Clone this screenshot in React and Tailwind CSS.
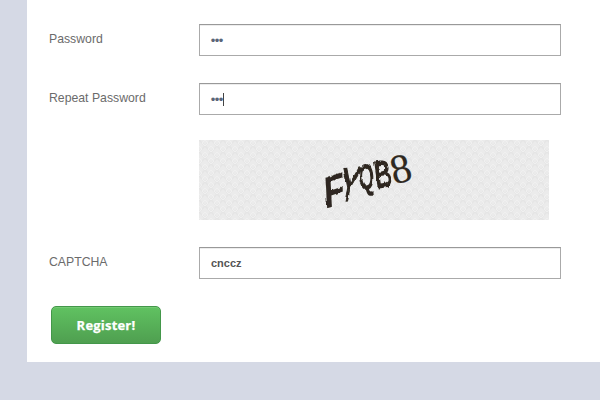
import React from "react";

const CAPTCHA_GLYPHS = [
  { char: "F", transform: "translate(136 65.5) rotate(-3) skewY(-16) scale(.72 .96)", size: 46, stroke: 0.2, weight: 700, serif: false, rough: true },
  { char: "Y", transform: "translate(147.5 61) rotate(-2) skewX(-13) scale(.6 1)", size: 47, stroke: 1.4, weight: 400, serif: false, rough: true },
  { char: "Q", transform: "translate(168 48.5) rotate(-3) scale(.56 1)", size: 34, stroke: 2, weight: 400, serif: false, rough: true },
  { char: "B", transform: "translate(185.5 46.5) rotate(-8) scale(.68 1)", size: 37, stroke: 1.8, weight: 400, serif: false, rough: true },
  { char: "8", transform: "translate(205 42) rotate(-14)", size: 41, stroke: 0.2, weight: 400, serif: true, rough: false },
];

function Captcha() {
  return (
    <svg className="block h-20 w-[350px] bg-[#ebebeb]" viewBox="0 0 350 80">
      <defs>
        <pattern id="lattice" width="12" height="12" patternUnits="userSpaceOnUse">
          <path d="M0 0L12 12M12 0L0 12" stroke="#e5e5e5" strokeWidth="1.5" />
          <path d="M6 0l3 3-3 3-3-3zM0 6l3 3-3 3M12 6l-3 3 3 3" fill="none" stroke="#f0f0f0" strokeWidth="1" />
        </pattern>
        <filter id="brush" x="-30%" y="-30%" width="160%" height="160%">
          <feTurbulence type="fractalNoise" baseFrequency="0.25 0.09" numOctaves="2" seed="3" result="noise" />
          <feDisplacementMap in="SourceGraphic" in2="noise" scale="3.5" xChannelSelector="R" yChannelSelector="G" />
        </filter>
      </defs>
      <rect width="350" height="80" fill="url(#lattice)" />
      <g fill="#2e2820" stroke="#2e2820">
        {CAPTCHA_GLYPHS.map((g) => (
          <g key={g.char} filter={g.rough ? "url(#brush)" : undefined}>
            <text
              transform={g.transform}
              textAnchor="middle"
              fontSize={g.size}
              fontWeight={g.weight}
              strokeWidth={g.stroke}
              className={g.serif ? "font-['Liberation_Serif',serif]" : "font-['Liberation_Sans',sans-serif]"}
            >
              {g.char}
            </text>
          </g>
        ))}
      </g>
    </svg>
  );
}

function Row({ label, className = "", children }) {
  return (
    <div className={`flex items-center ${className}`}>
      <div className="w-[150px] shrink-0 pb-[3px] text-[12.25px] leading-4 text-[#6b6b6b]">{label}</div>
      {children}
    </div>
  );
}

function Field({ children }) {
  return (
    <div className="flex h-8 w-[362px] items-center border border-[#aaa] border-t-[#999] bg-white pl-[11px] shadow-[inset_0_1px_0_#ededed]">
      {children}
    </div>
  );
}

function Dots() {
  return (
    <span className="flex pt-px">
      {[0, 1, 2].map((i) => (
        <span key={i} className="flex w-1 items-center justify-center text-[13px] leading-3 text-[#5a6678]">
          •
        </span>
      ))}
    </span>
  );
}

export default function App() {
  return (
    <div className="h-[400px] w-[600px] overflow-hidden bg-[#d5d9e5] pl-[27px] font-['Liberation_Sans',Arial,sans-serif]">
      <div className="flex h-[362px] flex-col items-start bg-white pl-[22px] pt-6">
        <Row label="Password">
          <Field>
            <Dots />
          </Field>
        </Row>
        <Row label="Repeat Password" className="mt-[27px]">
          <Field>
            <Dots />
            <span className="h-[13px] w-px bg-[#444]" />
          </Field>
        </Row>
        <Row label="" className="mt-[25px]">
          <Captcha />
        </Row>
        <Row label="CAPTCHA" className="mt-[27px]">
          <Field>
            <span className="text-[11px] font-bold leading-3 text-[#555]">cnccz</span>
          </Field>
        </Row>
        <button className="ml-0.5 mt-[27px] h-[38px] w-[110px] rounded-[5px] border border-[#43974a] bg-linear-to-b from-[#60c261] to-[#4f9f50] pt-px font-['Open_Sans',sans-serif] text-[13px] font-bold tracking-[0.2px] text-white shadow-[inset_0_1px_0_#73ca73] [-webkit-text-stroke:0.25px_white]">
          Register!
        </button>
      </div>
    </div>
  );
}
